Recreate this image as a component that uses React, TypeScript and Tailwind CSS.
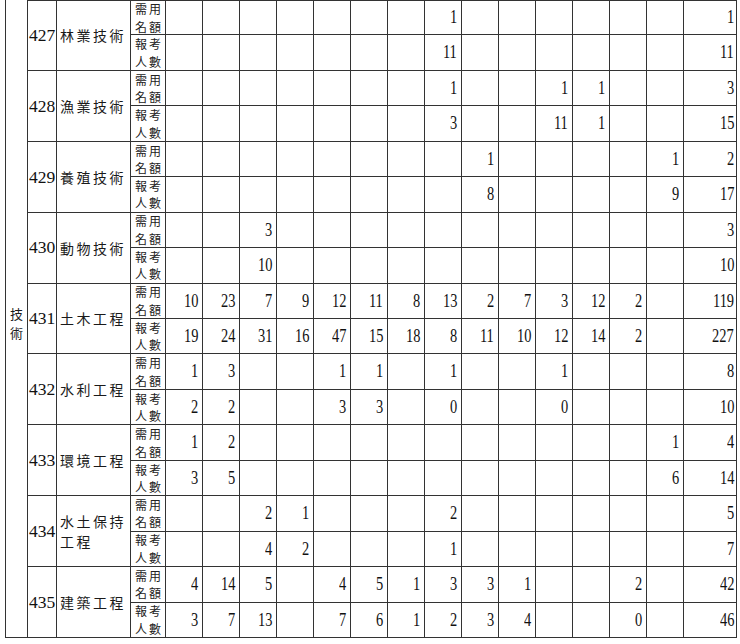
import React from "react";

type Group = { code: string; name: string; need: string[]; apply: string[] };

const E = "";
const groups: Group[] = [
  {
    code: "427",
    name: "林業技術",
    need: [E, E, E, E, E, E, E, "1", E, E, E, E, E, E, "1"],
    apply: [E, E, E, E, E, E, E, "11", E, E, E, E, E, E, "11"],
  },
  {
    code: "428",
    name: "漁業技術",
    need: [E, E, E, E, E, E, E, "1", E, E, "1", "1", E, E, "3"],
    apply: [E, E, E, E, E, E, E, "3", E, E, "11", "1", E, E, "15"],
  },
  {
    code: "429",
    name: "養殖技術",
    need: [E, E, E, E, E, E, E, E, "1", E, E, E, E, "1", "2"],
    apply: [E, E, E, E, E, E, E, E, "8", E, E, E, E, "9", "17"],
  },
  {
    code: "430",
    name: "動物技術",
    need: [E, E, "3", E, E, E, E, E, E, E, E, E, E, E, "3"],
    apply: [E, E, "10", E, E, E, E, E, E, E, E, E, E, E, "10"],
  },
  {
    code: "431",
    name: "土木工程",
    need: ["10", "23", "7", "9", "12", "11", "8", "13", "2", "7", "3", "12", "2", E, "119"],
    apply: ["19", "24", "31", "16", "47", "15", "18", "8", "11", "10", "12", "14", "2", E, "227"],
  },
  {
    code: "432",
    name: "水利工程",
    need: ["1", "3", E, E, "1", "1", E, "1", E, E, "1", E, E, E, "8"],
    apply: ["2", "2", E, E, "3", "3", E, "0", E, E, "0", E, E, E, "10"],
  },
  {
    code: "433",
    name: "環境工程",
    need: ["1", "2", E, E, E, E, E, E, E, E, E, E, E, "1", "4"],
    apply: ["3", "5", E, E, E, E, E, E, E, E, E, E, E, "6", "14"],
  },
  {
    code: "434",
    name: "水土保持工程",
    need: [E, E, "2", "1", E, E, E, "2", E, E, E, E, E, E, "5"],
    apply: [E, E, "4", "2", E, E, E, "1", E, E, E, E, E, E, "7"],
  },
  {
    code: "435",
    name: "建築工程",
    need: ["4", "14", "5", E, "4", "5", "1", "3", "3", "1", E, E, "2", E, "42"],
    apply: ["3", "7", "13", E, "7", "6", "1", "2", "3", "4", E, E, "0", E, "46"],
  },
];

const cjk = "font-['Noto_Sans_CJK_TC',sans-serif]";
const serif = "font-['Liberation_Serif',serif]";

function NumCell({ v, top, last }: { v: string; top: boolean; last: boolean }) {
  return (
    <div
      className={
        "flex items-center justify-end border-r border-b border-[#333] " +
        (top ? "border-t " : "") +
        (last ? "pr-[2px]" : "pr-[4px]")
      }
    >
      {v !== "" && (
        <span
          className={
            "inline-block origin-right scale-x-[0.78] text-[18.5px] leading-none text-[#111] " +
            serif
          }
        >
          {v}
        </span>
      )}
    </div>
  );
}

function LabelCell({ a, b, top }: { a: string; b: string; top: boolean }) {
  return (
    <div
      className={
        "flex flex-col items-center justify-center border-r border-b border-[#333] text-[12px] leading-[17.5px] tracking-[2px] text-[#222] pl-[2px] " +
        (top ? "border-t " : "") +
        cjk
      }
    >
      <div>{a}</div>
      <div>{b}</div>
    </div>
  );
}

export default function App() {
  return (
    <div className="w-[740px] h-[644px] bg-white overflow-hidden">
      <div className="ml-[5px] grid h-[638px] grid-cols-[22px_29px_74px_35px_repeat(14,37px)_53px] grid-rows-[repeat(18,minmax(0,1fr))] border-l border-[#333]">
        <div
          className={
            "col-start-1 row-[1/19] flex flex-col items-center justify-center border-r border-b border-[#333] pt-[10px] text-[13px] leading-[19px] text-[#1a1a1a] " +
            cjk
          }
        >
          <div>技</div>
          <div>術</div>
        </div>
        {groups.map((g, gi) => {
          const top = gi === 0;
          return (
            <React.Fragment key={g.code}>
              <div
                className={
                  "row-span-2 flex items-center justify-center border-r border-b border-[#333] text-[17.5px] text-[#111] " +
                  (top ? "border-t " : "") +
                  serif
                }
              >
                {g.code}
              </div>
              <div
                className={
                  "row-span-2 flex items-center pl-[3px] border-r border-b border-[#333] text-[14px] leading-[20px] tracking-[2.5px] text-[#1a1a1a] " +
                  (top ? "border-t " : "") +
                  cjk
                }
              >
                <span>{g.name}</span>
              </div>
              <LabelCell a="需用" b="名額" top={top} />
              {g.need.map((v, i) => (
                <NumCell key={"n" + i} v={v} top={top} last={i === 14} />
              ))}
              <LabelCell a="報考" b="人數" top={false} />
              {g.apply.map((v, i) => (
                <NumCell key={"a" + i} v={v} top={false} last={i === 14} />
              ))}
            </React.Fragment>
          );
        })}
      </div>
    </div>
  );
}
